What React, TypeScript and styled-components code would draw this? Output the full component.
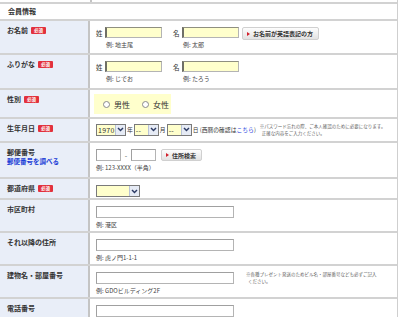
import styled, { createGlobalStyle } from 'styled-components';

const GlobalStyle = createGlobalStyle`
	html, body {
		margin: 0;
		padding: 0;
		background: #fff;
	}
	body {
		font-family: "Noto Sans CJK JP", "Noto Sans", sans-serif;
		font-size: 7px;
		color: #333;
	}
`;

const Chevron = () => (
	<svg width="7" height="5" viewBox="0 0 7 5">
		<path d="M1 1 L3.5 3.6 L6 1" fill="none" stroke="#2b3a63" strokeWidth="1.4" />
	</svg>
);

const Select = ({ value, width }: { value: string; width: number }) => (
	<SelectBox style={{ width }}>
		<SelectValue>{value}</SelectValue>
		<SelectArrow>
			<Chevron />
		</SelectArrow>
	</SelectBox>
);

const Row = ({
	label,
	required,
	h,
	sub,
	children,
}: {
	label: string;
	required?: boolean;
	h: number;
	sub?: string;
	children?: React.ReactNode;
}) => (
	<RowWrap $h={h}>
		<LabelCell>
			<LabelLine>
				<Label>{label}</Label>
				{required && <Badge>必須</Badge>}
			</LabelLine>
			{sub && <SubLink>{sub}</SubLink>}
		</LabelCell>
		<ValueCell>{children}</ValueCell>
	</RowWrap>
);

const NameField = ({ kanji, example }: { kanji: string; example: string }) => (
	<NameGroup>
		<NameTop>
			<Kanji>{kanji}</Kanji>
			<Input $w={57} $yellow />
		</NameTop>
		<Example $indent={10}>{example}</Example>
	</NameGroup>
);

const App = () => {
	return (
		<>
			<GlobalStyle />
			<Table>
				<TopRow>
					<TopLeft />
				</TopRow>
				<Header>会員情報</Header>

				<Row label="お名前" required h={34}>
					<NameLine>
						<NameField kanji="姓" example="例: 地主尾" />
						<NameField kanji="名" example="例: 太郎" />
						<GrayButton>
							<Tri />
							お名前が英語表記の方
						</GrayButton>
					</NameLine>
				</Row>

				<Row label="ふりがな" required h={35}>
					<NameLine>
						<NameField kanji="姓" example="例: じでお" />
						<NameField kanji="名" example="例: たろう" />
					</NameLine>
				</Row>

				<Row label="性別" required h={29}>
					<RadioBox>
						<RadioItem>
							<Radio />
							男性
						</RadioItem>
						<RadioItem>
							<Radio />
							女性
						</RadioItem>
					</RadioBox>
				</Row>

				<Row label="生年月日" required h={24}>
					<BirthLine>
						<Select value="1970" width={30} />
						<Unit>年</Unit>
						<Select value="--" width={25} />
						<Unit>月</Unit>
						<Select value="--" width={25} />
						<Unit>
							日 (西暦の確認は<Blue>こちら</Blue>)
						</Unit>
						<Note>
							※パスワード忘れの際、ご本人確認のために必要になります。
							<br />
							&nbsp;&nbsp;正確な内容をご入力ください。
						</Note>
					</BirthLine>
				</Row>

				<Row label="郵便番号" sub="郵便番号を調べる" h={36}>
					<Stack>
						<ZipLine>
							<Input $w={25} $h={12} />
							<Dash>-</Dash>
							<Input $w={25} $h={12} />
							<GrayButton $small>
								<Tri />
								住所検索
							</GrayButton>
						</ZipLine>
						<Example>例: 123-XXXX（半角）</Example>
					</Stack>
				</Row>

				<Row label="都道府県" required h={21}>
					<Select value="" width={44} />
				</Row>

				<Row label="市区町村" h={33}>
					<Stack>
						<Input $w={138} $h={12} />
						<Example>例: 港区</Example>
					</Stack>
				</Row>

				<Row label="それ以降の住所" h={33}>
					<Stack>
						<Input $w={138} $h={12} />
						<Example>例: 虎ノ門1-1-1</Example>
					</Stack>
				</Row>

				<Row label="建物名・部屋番号" h={33}>
					<AddressLine>
						<Stack>
							<Input $w={138} $h={12} />
							<Example>例: GDOビルディング2F</Example>
						</Stack>
						<Note $wide>
							※各種プレゼント発送のためビル名・部屋番号なども必ずご記入
							<br />
							&nbsp;&nbsp;ください。
						</Note>
					</AddressLine>
				</Row>

				<Row label="電話番号" h={30}>
					<Stack>
						<Input $w={138} $h={12} />
					</Stack>
				</Row>
			</Table>
		</>
	);
};

const Table = styled.div`
	width: 397px;
	border-right: 1px solid #cfcfcf;
`;
const TopRow = styled.div`
	height: 2px;
	border-bottom: 2px solid #d2d2d2;
	display: flex;
`;
const TopLeft = styled.div`
	width: 90px;
	border-right: 2px solid #c4c4c4;
`;
const Header = styled.div`
	height: 15px;
	line-height: 14px;
	padding-left: 8px;
	font-weight: bold;
	font-size: 7px;
	color: #333;
	border-bottom: 2px solid #d2d2d2;
`;
const RowWrap = styled.div<{ $h: number }>`
	display: grid;
	grid-template-columns: 90px 1fr;
	height: ${(p) => p.$h}px;
	box-sizing: border-box;
	border-bottom: 2px solid #d2d2d2;
	overflow: hidden;
`;
const LabelCell = styled.div`
	background: #e9eef8;
	border-right: 2px solid #c4c4c4;
	padding: 5px 0 0 7px;
`;
const LabelLine = styled.div`
	display: flex;
	align-items: center;
	gap: 3px;
`;
const Label = styled.span`
	font-weight: bold;
	font-size: 7px;
	color: #333;
	line-height: 9px;
`;
const Badge = styled.span`
	background: #e2313d;
	color: #fff;
	font-size: 4.5px;
	font-weight: bold;
	line-height: 7px;
	height: 7px;
	padding: 0 3px;
	border-radius: 1px;
`;
const SubLink = styled.div`
	color: #1a3cd6;
	font-size: 6.5px;
	font-weight: bold;
	line-height: 8px;
`;
const ValueCell = styled.div`
	padding: 6px 0 0 6px;
	display: flex;
	align-items: flex-start;
`;
const NameLine = styled.div`
	display: flex;
	align-items: flex-start;
	gap: 11px;
`;
const NameGroup = styled.div`
	display: flex;
	flex-direction: column;
`;
const NameTop = styled.div`
	display: flex;
	align-items: center;
	gap: 3px;
`;
const Kanji = styled.span`
	font-size: 6.5px;
	width: 6px;
	color: #333;
`;
const Input = styled.div<{ $w: number; $h?: number; $yellow?: boolean }>`
	width: ${(p) => p.$w}px;
	height: ${(p) => p.$h ?? 11}px;
	box-sizing: border-box;
	background: ${(p) => (p.$yellow ? '#ffffcc' : '#fff')};
	border: 1px solid #b4b4b4;
	border-top-color: ${(p) => (p.$yellow ? '#8f8f80' : '#a0a0a0')};
	border-left: ${(p) => (p.$yellow ? '2px solid #6f6f66' : '1px solid #a0a0a0')};
`;
const Example = styled.div<{ $indent?: number }>`
	font-size: 6px;
	color: #444;
	margin-top: 3px;
	padding-left: ${(p) => p.$indent ?? 0}px;
	line-height: 8px;
`;
const GrayButton = styled.div<{ $small?: boolean }>`
	display: flex;
	align-items: center;
	gap: 3px;
	height: ${(p) => (p.$small ? 12 : 13)}px;
	box-sizing: border-box;
	padding: 0 5px 0 4px;
	margin-left: ${(p) => (p.$small ? 5 : -8)}px;
	background: linear-gradient(#fdfdfd, #e2e2e2);
	border: 1px solid #d0d0d0;
	border-radius: 2px;
	font-size: 6px;
	font-weight: bold;
	color: #333;
	white-space: nowrap;
`;
const Tri = styled.span`
	width: 0;
	height: 0;
	border-left: 3px solid #d21f2b;
	border-top: 2px solid transparent;
	border-bottom: 2px solid transparent;
`;
const RadioBox = styled.div`
	background: #ffffcc;
	width: 77px;
	height: 20px;
	margin-top: -2px;
	margin-left: -2px;
	display: flex;
	align-items: center;
	gap: 12px;
	padding-left: 9px;
	box-sizing: border-box;
	white-space: nowrap;
`;
const RadioItem = styled.label`
	display: flex;
	align-items: center;
	gap: 4px;
	font-size: 8px;
	color: #333;
	white-space: nowrap;
	flex-shrink: 0;
`;
const Radio = styled.span`
	width: 5px;
	height: 5px;
	border: 1px solid #8a8a8a;
	border-radius: 50%;
	background: #fff;
	flex-shrink: 0;
`;
const BirthLine = styled.div`
	display: flex;
	align-items: center;
	margin-top: -2px;
`;
const SelectBox = styled.div`
	display: flex;
	height: 12px;
	box-sizing: border-box;
	border: 1px solid #7a7a7a;
	background: #ffffcc;
`;
const SelectValue = styled.span`
	flex: 1;
	font-size: 7px;
	line-height: 10px;
	padding-left: 1px;
	color: #333;
	letter-spacing: 0.3px;
`;
const SelectArrow = styled.span`
	width: 9px;
	background: #e6ebf5;
	border-left: 1px solid #b8c2d8;
	display: flex;
	align-items: center;
	justify-content: center;
`;
const Unit = styled.span`
	font-size: 5.8px;
	margin: 0 1px;
	color: #333;
	white-space: nowrap;
`;
const Blue = styled.span`
	color: #2a3fe0;
`;
const Note = styled.div<{ $wide?: boolean }>`
	font-size: 4.5px;
	line-height: 6.5px;
	color: #666;
	margin-left: ${(p) => (p.$wide ? 12 : 3)}px;
	white-space: nowrap;
	margin-top: ${(p) => (p.$wide ? -1 : 0)}px;
`;
const Stack = styled.div`
	display: flex;
	flex-direction: column;
`;
const ZipLine = styled.div`
	display: flex;
	align-items: center;
`;
const Dash = styled.span`
	width: 10px;
	text-align: center;
	color: #555;
`;
const AddressLine = styled.div`
	display: flex;
	align-items: flex-start;
`;

export default App;
